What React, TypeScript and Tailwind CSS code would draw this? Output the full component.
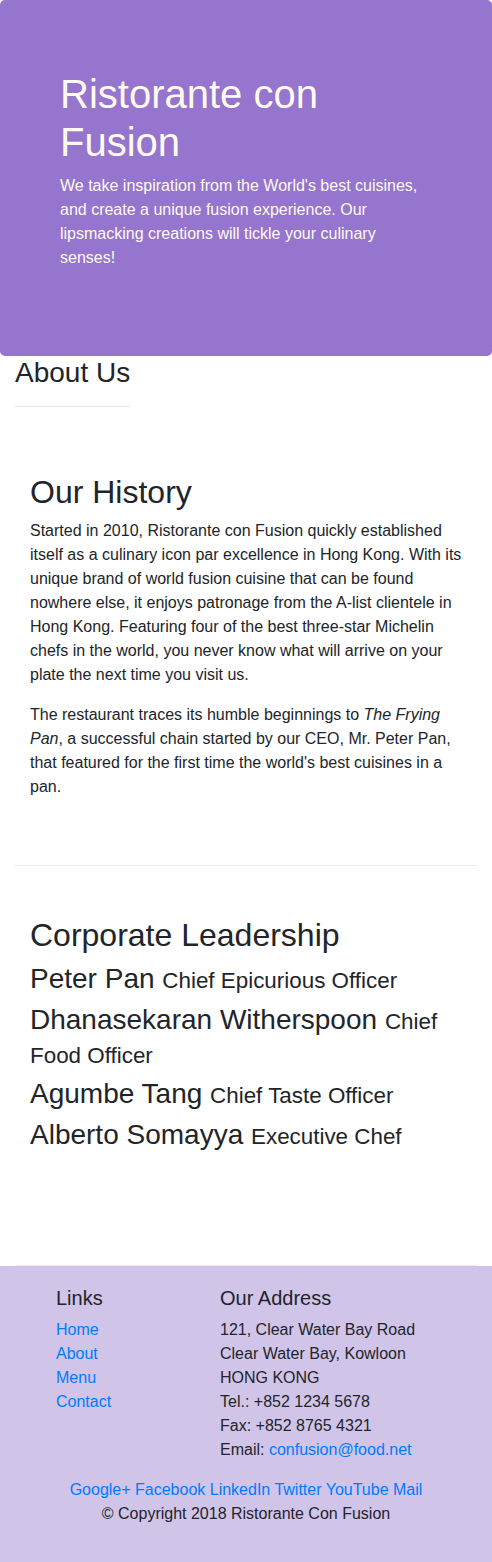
const leaders = [
  { name: 'Peter Pan', title: 'Chief Epicurious Officer' },
  { name: 'Dhanasekaran Witherspoon', title: 'Chief Food Officer' },
  { name: 'Agumbe Tang', title: 'Chief Taste Officer' },
  { name: 'Alberto Somayya', title: 'Executive Chef' },
]

const links = ['Home', 'About', 'Menu', 'Contact']
const social = ['Google+', 'Facebook', 'LinkedIn', 'Twitter', 'YouTube', 'Mail']

export default function App() {
  return (
    <div className="font-['Liberation_Sans',Arial,sans-serif] text-base leading-6 text-[#212529] bg-white">
      {/* Jumbotron */}
      <header className="rounded-[5px] bg-[#9575cd] px-[30px] py-[70px] text-[#fffaf0]">
        <div className="px-[30px]">
          <h1 className="mb-2 text-[40px] leading-[48px] font-normal">Ristorante con Fusion</h1>
          <p className="mb-4">
            We take inspiration from the World's best cuisines, and create a unique fusion
            experience. Our lipsmacking creations will tickle your culinary senses!
          </p>
        </div>
      </header>

      <div className="px-[15px]">
        <h3 className="text-[28px] leading-[33.6px] font-normal">About Us</h3>
        <hr className="my-4 w-[115px] border-t border-[#e6e6e6]" />

        {/* History */}
        <div className="min-h-[400px] border-b border-[#ececec] py-[50px]">
          <div className="px-[15px]">
            <h2 className="mb-2 text-[32px] leading-[38.4px] font-normal">Our History</h2>
            <p className="mb-4">
              Started in 2010, Ristorante con Fusion quickly established itself as a culinary
              icon par excellence in Hong Kong. With its unique brand of world fusion cuisine
              that can be found nowhere else, it enjoys patronage from the A-list clientele in
              Hong Kong. Featuring four of the best three-star Michelin chefs in the world, you
              never know what will arrive on your plate the next time you visit us.
            </p>
            <p className="mb-4">
              The restaurant traces its humble beginnings to <em>The Frying Pan</em>, a
              successful chain started by our CEO, Mr. Peter Pan, that featured for the first
              time the world's best cuisines in a pan.
            </p>
          </div>
        </div>

        {/* Leadership */}
        <div className="min-h-[400px] border-b border-[#ececec] py-[50px]">
          <div className="px-[15px]">
            <h2 className="mb-2 text-[32px] leading-[38.4px] font-normal">Corporate Leadership</h2>
            {leaders.map((l) => (
              <h3 key={l.name} className="mb-[7px] text-[28px] leading-[1.2] font-normal">
                {l.name} <small className="text-[22.4px]">{l.title}</small>
              </h3>
            ))}
          </div>
        </div>
      </div>

      {/* Footer */}
      <footer className="bg-[#d1c4e9] py-5">
        <div className="flex">
          <div className="ml-[8.333333%] w-[33.333333%] px-[15px]">
            <h5 className="mb-2 text-xl leading-6 font-normal">Links</h5>
            <ul className="mb-4">
              {links.map((item) => (
                <li key={item}>
                  <a href="#" className="text-[#007bff]">{item}</a>
                </li>
              ))}
            </ul>
          </div>
          <div className="w-[58.333333%] px-[15px]">
            <h5 className="mb-2 text-xl leading-6 font-normal">Our Address</h5>
            <address className="mb-4 not-italic">
              121, Clear Water Bay Road<br />
              Clear Water Bay, Kowloon<br />
              HONG KONG<br />
              Tel.: +852 1234 5678<br />
              Fax: +852 8765 4321<br />
              Email: <a href="#" className="text-[#007bff]">confusion@food.net</a>
            </address>
          </div>
        </div>
        <div className="text-center">
          {social.map((s, i) => (
            <span key={s}>
              <a href="#" className="text-[#007bff]">{s}</a>
              {i < social.length - 1 ? ' ' : ''}
            </span>
          ))}
        </div>
        <p className="mb-4 text-center">© Copyright 2018 Ristorante Con Fusion</p>
      </footer>
    </div>
  )
}
